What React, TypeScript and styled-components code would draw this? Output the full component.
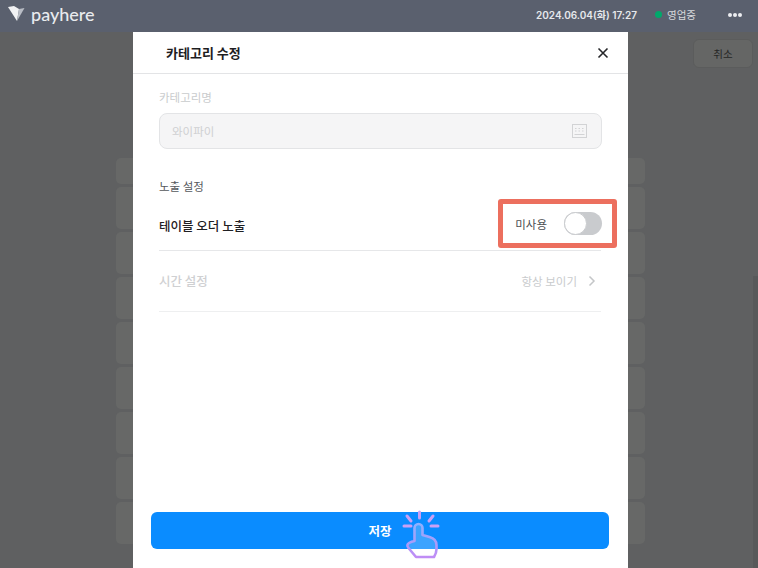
import React from 'react';
import styled, { createGlobalStyle } from 'styled-components';

const GlobalStyle = createGlobalStyle`
  html, body {
    margin: 0;
    padding: 0;
    background: #5f6061;
  }
  * {
    box-sizing: border-box;
  }
  body {
    font-family: "Noto Sans CJK KR", "Noto Sans", sans-serif;
  }
`;

const Page = styled.div`
  position: relative;
  display: flex;
  flex-direction: column;
  width: 758px;
  height: 568px;
  overflow: hidden;
  background: #5f6061;
`;

const Header = styled.header`
  display: flex;
  align-items: center;
  flex: 0 0 32px;
  padding: 0 16px 3px 8px;
  background: #5a606e;
`;

const Logo = styled.div`
  display: flex;
  align-items: center;
  gap: 6px;
  margin-top: -2px;
`;

const LogoText = styled.span`
  font-family: Lato, "Noto Sans", sans-serif;
  font-size: 18px;
  font-weight: 500;
  line-height: 22px;
  color: #e9ebee;
`;

const HeaderRight = styled.div`
  display: flex;
  align-items: center;
  margin-left: auto;
`;

const DateText = styled.span`
  font-family: Inter, "Noto Sans CJK KR", sans-serif;
  font-size: 10px;
  font-weight: 600;
  color: #e6e8ec;
`;

const StatusDot = styled.span`
  width: 7px;
  height: 7px;
  margin: 0 5px 0 18px;
  border-radius: 50%;
  background: #00a86b;
`;

const StatusText = styled.span`
  font-size: 10.5px;
  color: #d6d8dc;
`;

const Dots = styled.span`
  display: flex;
  gap: 1px;
  margin-left: 32px;
`;

const Dot = styled.i`
  width: 4px;
  height: 4px;
  border-radius: 50%;
  background: #eceef1;
`;

const Content = styled.main`
  display: flex;
  flex-direction: column;
  flex: 1;
`;

const Toolbar = styled.div`
  display: flex;
  justify-content: flex-end;
  padding: 7px 5px 0 0;
`;

const CancelButton = styled.button`
  width: 60px;
  height: 29px;
  padding: 0;
  border: 1px solid #5b5c5c;
  border-radius: 6px;
  background: #656665;
  font-family: inherit;
  font-size: 10.5px;
  color: #262626;
`;

const CategoryList = styled.div`
  display: flex;
  flex-direction: column;
  gap: 3px;
  padding: 90px 113px 0 116px;
`;

const CategoryRow = styled.div<{ $short?: boolean }>`
  height: ${(p) => (p.$short ? '26px' : '42px')};
  border-radius: 5px;
  background: #676867;
`;

const ScrollThumb = styled.div`
  position: absolute;
  top: 276px;
  right: 0;
  bottom: 0;
  width: 5px;
  background: #58595a;
`;

const Modal = styled.section`
  position: absolute;
  top: 32px;
  bottom: 0;
  left: 133px;
  display: flex;
  flex-direction: column;
  width: 495px;
  background: #fff;
`;

const ModalHeader = styled.div`
  display: flex;
  align-items: center;
  justify-content: space-between;
  flex: 0 0 42px;
  padding: 0 18px 0 33px;
  border-bottom: 1px solid #e3e4e6;
`;

const ModalTitle = styled.h2`
  margin: 0;
  font-size: 13px;
  font-weight: 700;
  color: #1d1d1f;
`;

const CloseButton = styled.span`
  display: flex;
  color: #26272a;
`;

const ModalBody = styled.div`
  display: flex;
  flex-direction: column;
  flex: 1;
  padding: 14px 27px 0 26px;
`;

const FieldLabel = styled.div<{ $muted?: boolean }>`
  font-size: 11.5px;
  line-height: 18px;
  color: ${(p) => (p.$muted ? '#c9cbcd' : '#55585c')};
`;

const FakeInput = styled.div`
  display: flex;
  align-items: center;
  justify-content: space-between;
  height: 36px;
  margin: 7px -1px 0 0;
  padding: 0 14px 0 12px;
  border: 1px solid #e3e4e6;
  border-radius: 8px;
  background: #f5f5f6;
  font-size: 11.5px;
  color: #cfd0d2;
`;

const SectionLabel = styled(FieldLabel)`
  margin-top: 28px;
`;

const SettingRow = styled.div`
  display: flex;
  align-items: center;
  justify-content: space-between;
  height: 52px;
  margin-top: 4px;
  border-bottom: 1px solid #e6e7e9;
`;

const SettingName = styled.span`
  margin-top: 2px;
  font-size: 12.5px;
  font-weight: 500;
  color: #1f2023;
`;

const Highlight = styled.div`
  display: flex;
  align-items: center;
  align-self: flex-start;
  height: 49px;
  margin-right: -16px;
  padding: 0 10px 0 12px;
  border: 5px solid #ec6f5e;
  border-radius: 3px;
`;

const ToggleLabel = styled.span`
  margin-right: 17px;
  font-size: 11.5px;
  color: #4c4f53;
`;

const ToggleTrack = styled.div`
  width: 38px;
  height: 23px;
  border-radius: 12px;
  background: #c9cbce;
`;

const ToggleKnob = styled.div`
  width: 23px;
  height: 23px;
  border: 1.5px solid #c9cbce;
  border-radius: 50%;
  background: #fff;
`;

const TimeRow = styled.div`
  display: flex;
  align-items: center;
  justify-content: space-between;
  height: 61px;
  padding: 0 5px 1px 0;
  border-bottom: 1px solid #eeeff0;
`;

const TimeName = styled.span`
  font-size: 12.5px;
  font-weight: 500;
  color: #cfd0d2;
`;

const TimeValue = styled.span`
  display: flex;
  align-items: center;
  gap: 11px;
  font-size: 11.5px;
  color: #c9cbcd;
`;

const ModalFooter = styled.div`
  padding: 0 19px 19px 18px;
`;

const SaveButton = styled.button`
  width: 100%;
  height: 37px;
  padding: 0;
  border: none;
  border-radius: 6px;
  background: #0a8cff;
  font-family: inherit;
  font-size: 12.5px;
  font-weight: 700;
  color: #fff;
`;

const TapCursor = styled.svg`
  position: absolute;
  top: 508px;
  left: 400px;
`;

const categoryRows = [true, false, false, false, false, false, false, false, false];

function PayhereMark() {
  return (
    <svg width="17" height="16" viewBox="0 0 17 16" aria-hidden="true">
      <path d="M0 1 L6 0 L11 3 L9 15 Z" fill="#f1f2f4" />
      <path d="M9 15 L11 3 L16.5 2 Z" fill="#b9bdc5" />
    </svg>
  );
}

function KeyboardIcon() {
  return (
    <svg width="15" height="14" viewBox="0 0 15 14" fill="none" stroke="#d2d3d5" aria-hidden="true">
      <rect x="0.5" y="0.5" width="14" height="13" strokeWidth="1" />
      <path d="M3 4.5h1.5M6.5 4.5H8M10 4.5h1.5M3 7h1.5M6.5 7H8M10 7h1.5" strokeWidth="1" />
      <path d="M2.5 10.5h10" strokeWidth="1" />
    </svg>
  );
}

function TapIcon() {
  return (
    <TapCursor width="42" height="52" viewBox="0 0 42 52" fill="none" aria-hidden="true">
      <defs>
        <linearGradient id="tap" x1="0" y1="0" x2="0" y2="1">
          <stop offset="0" stopColor="#8fb0ff" />
          <stop offset="1" stopColor="#c08cf5" />
        </linearGradient>
      </defs>
      <path
        d="M14.5 33 V20 a4 4 0 0 1 8 0 V27 l7 2 q7 2 7 8 V41 q0 4 -2.5 8 H16 L8.5 40 q-2.5 -3 .5 -5 q2.5 -1.5 5.5 -2 Z"
        fill="#ffffff"
        fillOpacity="0.2"
        stroke="url(#tap)"
        strokeWidth="2.6"
        strokeLinejoin="round"
      />
      <path
        d="M19.5 4v6M7 8l4 5M33 8l-4 5M4 18h7M31 18h7"
        stroke="#c9a0f5"
        strokeWidth="3"
        strokeLinecap="round"
      />
    </TapCursor>
  );
}

export default function App() {
  return (
    <Page>
      <GlobalStyle />
      <Header>
        <Logo>
          <PayhereMark />
          <LogoText>payhere</LogoText>
        </Logo>
        <HeaderRight>
          <DateText>2024.06.04(화) 17:27</DateText>
          <StatusDot />
          <StatusText>영업중</StatusText>
          <Dots>
            <Dot />
            <Dot />
            <Dot />
          </Dots>
        </HeaderRight>
      </Header>

      <Content>
        <Toolbar>
          <CancelButton>취소</CancelButton>
        </Toolbar>
        <CategoryList>
          {categoryRows.map((short, i) => (
            <CategoryRow key={i} $short={short} />
          ))}
        </CategoryList>
      </Content>
      <ScrollThumb />

      <Modal>
        <ModalHeader>
          <ModalTitle>카테고리 수정</ModalTitle>
          <CloseButton>
            <svg width="14" height="14" viewBox="0 0 14 14" stroke="currentColor" strokeWidth="1.6" aria-hidden="true">
              <path d="M2.5 2.5l9 9M11.5 2.5l-9 9" />
            </svg>
          </CloseButton>
        </ModalHeader>
        <ModalBody>
          <FieldLabel $muted>카테고리명</FieldLabel>
          <FakeInput>
            와이파이
            <KeyboardIcon />
          </FakeInput>
          <SectionLabel>노출 설정</SectionLabel>
          <SettingRow>
            <SettingName>테이블 오더 노출</SettingName>
            <Highlight>
              <ToggleLabel>미사용</ToggleLabel>
              <ToggleTrack>
                <ToggleKnob />
              </ToggleTrack>
            </Highlight>
          </SettingRow>
          <TimeRow>
            <TimeName>시간 설정</TimeName>
            <TimeValue>
              항상 보이기
              <svg width="8" height="12" viewBox="0 0 8 12" fill="none" stroke="#c4c6c8" strokeWidth="1.5" aria-hidden="true">
                <path d="M1.5 1.5L6 6l-4.5 4.5" />
              </svg>
            </TimeValue>
          </TimeRow>
        </ModalBody>
        <ModalFooter>
          <SaveButton>저장</SaveButton>
        </ModalFooter>
      </Modal>
      <TapIcon />
    </Page>
  );
}
